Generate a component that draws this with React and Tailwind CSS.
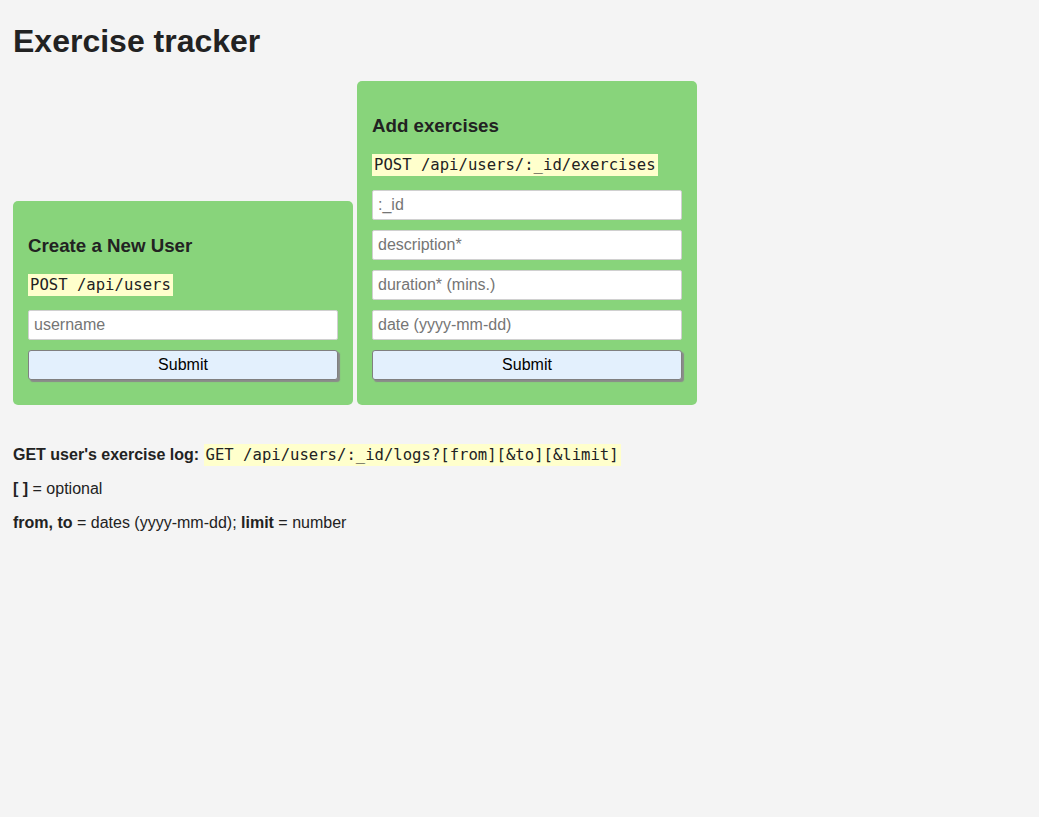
import React from "react";

function Code({ children }) {
  return (
    <code className="bg-[#ffffcc] px-[2px] py-[2px] font-['DejaVu_Sans_Mono',monospace] text-[15.6px] text-[#222]">
      {children}
    </code>
  );
}

function Field({ placeholder }) {
  return (
    <input
      placeholder={placeholder}
      className="mb-[10px] block h-[30px] w-full rounded-[2px] border border-[#d0d0d0] bg-white px-[5px] text-[16px] text-[#222] outline-none placeholder:text-[#757575]"
    />
  );
}

function SubmitButton() {
  return (
    <button className="mb-[10px] block h-[30px] w-full rounded-[3px] border border-[#808080] bg-[#e3f0fd] text-[16px] text-black shadow-[2px_2px_1px_#8a8a8a]">
      Submit
    </button>
  );
}

function Card({ title, code, fields }) {
  return (
    <div className="w-[340px] rounded-[5px] bg-[#88d47b] p-[15px]">
      <h3 className="mt-[18.72px] mb-[18.72px] text-[18.72px] font-bold leading-[21.5px]">{title}</h3>
      <p className="mb-[15px] leading-[19px]">
        <Code>{code}</Code>
      </p>
      {fields.map((f) => (
        <Field key={f} placeholder={f} />
      ))}
      <SubmitButton />
    </div>
  );
}

export default function App() {
  return (
    <div className="min-h-[817px] bg-[#f4f4f4] px-[13px] pt-px font-['Liberation_Sans',Arial,sans-serif] text-[16px] text-[#222]">
      <h1 className="mt-[21.44px] mb-[20.44px] text-[32px] font-bold leading-[38px]">Exercise tracker</h1>
      <div className="flex items-end gap-[4px]">
        <Card title="Create a New User" code="POST /api/users" fields={["username"]} />
        <Card
          title="Add exercises"
          code="POST /api/users/:_id/exercises"
          fields={[":_id", "description*", "duration* (mins.)", "date (yyyy-mm-dd)"]}
        />
      </div>
      <div className="mt-[41px]">
        <p className="mb-4 leading-[18px]">
          <b>GET user's exercise log:</b> <Code>GET /api/users/:_id/logs?[from][&amp;to][&amp;limit]</Code>
        </p>
        <p className="mb-4 leading-[18px]">
          <b>[ ]</b> = optional
        </p>
        <p className="mb-4 leading-[18px]">
          <b>from, to</b> = dates (yyyy-mm-dd); <b>limit</b> = number
        </p>
      </div>
    </div>
  );
}
